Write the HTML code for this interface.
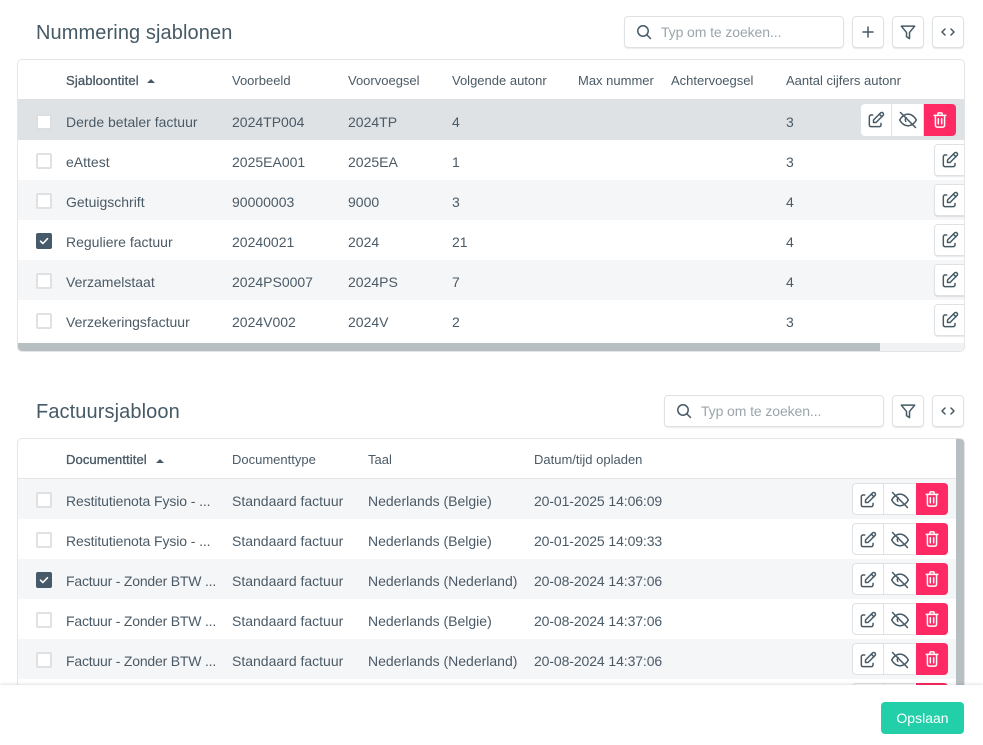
<!DOCTYPE html>
<html lang="nl">
<head>
<meta charset="utf-8">
<title>Sjablonen</title>
<style>
*{box-sizing:border-box}
html,body{margin:0;padding:0;width:983px;height:745px;overflow:hidden;background:#fff}
body{position:relative;font-family:"Liberation Sans",sans-serif;color:#4a5a66;font-size:14px}
.a{position:absolute}
h2{position:absolute;margin:0;font-weight:400;font-size:20px;line-height:24px;color:#465a66;white-space:nowrap;letter-spacing:.1px}
.box{position:absolute;background:#fff;border:1px solid #dfe2e4;border-radius:4px;box-shadow:0 1px 1px rgba(0,0,0,.08)}
.btn{position:absolute;width:32px;height:32px;background:#fff;border:1px solid #dfe2e4;border-radius:4px;box-shadow:0 1px 1px rgba(0,0,0,.1)}
.btn svg,.g svg{position:absolute;left:6px;top:6px}
svg{fill:none;stroke:#465a66;stroke-width:1.5;stroke-linecap:round;stroke-linejoin:round;display:block}
.g svg,.edit svg,.btn svg.f{stroke-width:1.8}
.ph{position:absolute;font-size:14px;line-height:16px;color:#9aa5ab;white-space:nowrap;letter-spacing:-.1px}
.tbl{position:absolute;left:17px;width:948px;background:#fff;border:1px solid #e3e5e7;overflow:hidden}
.row{position:absolute;left:0;width:948px;height:40px}
.row span,.hd span{position:absolute;white-space:nowrap;line-height:16px}
.row span{top:14px;font-size:14px;color:#4a5a66}
.row span.n{letter-spacing:-.2px}
.row span.r{letter-spacing:-.1px}
.row span.d{letter-spacing:-.1px}
.hd{position:absolute;left:0;top:0;width:948px;height:40px}
.hd span{top:13px;font-size:13px;color:#4a5a66}
.hd b{font-weight:400;-webkit-text-stroke:.35px #4a5a66}
.s{background:#f5f6f8}
.h{background:#dfe2e5}
.cb{position:absolute;left:18px;top:13px;width:16px;height:16px;background:#fff;border:2px solid #e0e1e2;border-radius:2px}
.cb.on{background:#465a6a;border-color:#465a6a}
.cb.on svg{position:absolute;left:0;top:0;stroke:#fff;stroke-width:1.6}
.arr{position:absolute;width:0;height:0;border-left:4px solid transparent;border-right:4px solid transparent;border-bottom:4px solid #465a66}
.g{position:absolute;width:32px;height:32px;background:#fff;border:1px solid #dfe2e4}
.g.e{border-radius:4px 0 0 4px;border-right:0}
.g.o{border-left:1px solid #dfe2e4;border-right:0}
.g.d{background:#ff2a63;border:0;border-radius:0 4px 4px 0}
.g.d svg{stroke:#fff;left:6px;top:6px}
.g.o svg{left:5px}
.g.e svg{left:5px}
.edit{position:absolute;left:916px;top:4px;width:40px;height:32px;background:#fff;border:1px solid #dfe2e4;border-radius:4px;box-shadow:0 1px 1px rgba(0,0,0,.1)}
.edit svg{position:absolute;left:5px;top:5px}
</style>
</head>
<body>
<svg width="0" height="0" style="position:absolute">
<defs>
<symbol id="i-edit" viewBox="0 0 24 24"><path d="M8 6H6a2 2 0 0 0-2 2v10a2 2 0 0 0 2 2h10a2 2 0 0 0 2-2v-2"/><path d="M20.400 6.600a2.100 2.100 0 0 0-3-3L9 12v3h3z"/><path d="M16 5l3 3"/></symbol>
<symbol id="i-eye" viewBox="0 0 24 24"><path d="M3 3l18 18"/><path d="M2 12c2.700-4.700 6-7 10-7s7.300 2.300 10 7c-2.700 4.700-6 7-10 7s-7.300-2.300-10-7z"/><path d="M10 9.300a3 3 0 0 0-.6 4.400"/></symbol>
<symbol id="i-trash" viewBox="0 0 24 24"><path d="M5 6.500h14"/><path d="M9.500 6.500V4.500a1 1 0 0 1 1-1h3a1 1 0 0 1 1 1v2"/><path d="M6.500 6.500v12a2 2 0 0 0 2 2h7a2 2 0 0 0 2-2v-12"/><path d="M10 10.500v6M14 10.500v6"/></symbol>
<symbol id="i-filter" viewBox="0 0 24 24"><path d="M4 5h16l-6.200 7.500V20l-3.600-2.500v-5z"/></symbol>
</defs>
</svg>

<h2 style="left:36px;top:21px">Nummering sjablonen</h2>

<div class="box" style="left:624px;top:16px;width:220px;height:32px"></div>
<svg class="a" style="left:636px;top:24px" width="16" height="16" viewBox="0 0 16 16"><circle cx="7" cy="7" r="5.200"/><path d="M11 11l3.500 3.500"/></svg>
<span class="ph" style="left:661px;top:24px">Typ om te zoeken...</span>
<div class="btn" style="left:852px;top:16px"><svg width="18" height="18" viewBox="0 0 18 18" style="left:6px;top:6px"><path d="M9 4v10M4 9h10"/></svg></div>
<div class="btn" style="left:892px;top:16px"><svg class="f" width="20" height="20" style="left:5px;top:5px"><use href="#i-filter"/></svg></div>
<div class="btn" style="left:932px;top:16px"><svg width="18" height="18" viewBox="0 0 18 18" style="left:6px;top:6px"><path d="M6 6L3 9l3 3M12 6l3 3-3 3"/></svg></div>

<div class="tbl" style="top:59px;height:293px;border-radius:5px">
  <div class="hd">
    <span style="left:48px;letter-spacing:.15px"><b>Sjabloontitel</b></span><i class="arr" style="left:129px;top:19px"></i>
    <span style="left:214px">Voorbeeld</span>
    <span style="left:330px">Voorvoegsel</span>
    <span style="left:434px">Volgende autonr</span>
    <span style="left:560px">Max nummer</span>
    <span style="left:653px">Achtervoegsel</span>
    <span style="left:768px">Aantal cijfers autonr</span>
  </div>

  <div class="a h" style="left:0;top:39px;width:948px;height:1px"></div>
  <div class="row h" style="top:40px">
    <i class="cb" style="border-color:#dcdedf;top:14px"></i>
    <span style="left:48px">Derde betaler factuur</span><span style="left:214px">2024TP004</span><span style="left:330px">2024TP</span><span style="left:434px">4</span><span style="left:768px">3</span>
    <div class="g e" style="left:843px;top:4px;border:0;border-radius:4px 0 0 4px"><svg width="20" height="20" style="left:5px;top:6px"><use href="#i-edit"/></svg></div>
    <div class="g o" style="left:873px;top:4px;border-top:0;border-bottom:0"><svg width="20" height="20" style="left:6px;top:6px"><use href="#i-eye"/></svg></div>
    <div class="g d" style="left:906px;top:4px"><svg width="20" height="20"><use href="#i-trash"/></svg></div>
  </div>

  <div class="row" style="top:80px"><i class="cb"></i>
    <span style="left:48px">eAttest</span><span style="left:214px">2025EA001</span><span style="left:330px">2025EA</span><span style="left:434px">1</span><span style="left:768px">3</span>
    <div class="edit"><svg width="20" height="20"><use href="#i-edit"/></svg></div>
  </div>
  <div class="row s" style="top:120px"><i class="cb"></i>
    <span style="left:48px">Getuigschrift</span><span style="left:214px">90000003</span><span style="left:330px">9000</span><span style="left:434px">3</span><span style="left:768px">4</span>
    <div class="edit"><svg width="20" height="20"><use href="#i-edit"/></svg></div>
  </div>
  <div class="row" style="top:160px"><i class="cb on"><svg width="12" height="12" viewBox="0 0 12 12"><path d="M2.500 6.200l2.400 2.300 4.600-4.800"/></svg></i>
    <span style="left:48px">Reguliere factuur</span><span style="left:214px">20240021</span><span style="left:330px">2024</span><span style="left:434px">21</span><span style="left:768px">4</span>
    <div class="edit"><svg width="20" height="20"><use href="#i-edit"/></svg></div>
  </div>
  <div class="row s" style="top:200px"><i class="cb"></i>
    <span style="left:48px">Verzamelstaat</span><span style="left:214px">2024PS0007</span><span style="left:330px">2024PS</span><span style="left:434px">7</span><span style="left:768px">4</span>
    <div class="edit"><svg width="20" height="20"><use href="#i-edit"/></svg></div>
  </div>
  <div class="row" style="top:240px"><i class="cb"></i>
    <span style="left:48px">Verzekeringsfactuur</span><span style="left:214px">2024V002</span><span style="left:330px">2024V</span><span style="left:434px">2</span><span style="left:768px">3</span>
    <div class="edit"><svg width="20" height="20"><use href="#i-edit"/></svg></div>
  </div>
  <div class="a" style="left:0;top:283px;width:948px;height:9px;background:#f1f2f3"></div>
  <div class="a" style="left:0;top:283px;width:862px;height:9px;background:#b7bfc2"></div>
</div>

<h2 style="left:36px;top:400px">Factuursjabloon</h2>

<div class="box" style="left:664px;top:395px;width:220px;height:32px"></div>
<svg class="a" style="left:676px;top:403px" width="16" height="16" viewBox="0 0 16 16"><circle cx="7" cy="7" r="5.200"/><path d="M11 11l3.500 3.500"/></svg>
<span class="ph" style="left:701px;top:403px">Typ om te zoeken...</span>
<div class="btn" style="left:892px;top:395px"><svg class="f" width="20" height="20" style="left:5px;top:5px"><use href="#i-filter"/></svg></div>
<div class="btn" style="left:932px;top:395px"><svg width="18" height="18" viewBox="0 0 18 18" style="left:6px;top:6px"><path d="M6 6L3 9l3 3M12 6l3 3-3 3"/></svg></div>

<div class="tbl" style="top:438px;height:290px;border-radius:5px 5px 0 0">
  <div class="hd" style="border-bottom:1px solid #e3e5e7">
    <span style="left:48px;top:13px;letter-spacing:.1px"><b>Documenttitel</b></span><i class="arr" style="left:138px;top:20px"></i>
    <span style="left:214px;top:13px">Documenttype</span>
    <span style="left:350px;top:13px">Taal</span>
    <span style="left:516px;top:13px">Datum/tijd opladen</span>
  </div>

  <div class="row s" style="top:40px"><i class="cb"></i>
    <span class="r" style="left:48px">Restitutienota Fysio - ...</span><span style="left:214px">Standaard factuur</span><span style="left:350px">Nederlands (Belgie)</span><span class="d" style="left:516px">20-01-2025 14:06:09</span>
    <div class="g e" style="left:834px;top:4px;border-right:0"><svg width="20" height="20"><use href="#i-edit"/></svg></div>
    <div class="g o" style="left:865px;top:4px"><svg width="20" height="20" style="left:6px"><use href="#i-eye"/></svg></div>
    <div class="g d" style="left:898px;top:4px"><svg width="20" height="20"><use href="#i-trash"/></svg></div>
  </div>
  <div class="row" style="top:80px"><i class="cb"></i>
    <span class="r" style="left:48px">Restitutienota Fysio - ...</span><span style="left:214px">Standaard factuur</span><span style="left:350px">Nederlands (Belgie)</span><span class="d" style="left:516px">20-01-2025 14:09:33</span>
    <div class="g e" style="left:834px;top:4px"><svg width="20" height="20"><use href="#i-edit"/></svg></div>
    <div class="g o" style="left:865px;top:4px"><svg width="20" height="20" style="left:6px"><use href="#i-eye"/></svg></div>
    <div class="g d" style="left:898px;top:4px"><svg width="20" height="20"><use href="#i-trash"/></svg></div>
  </div>
  <div class="row s" style="top:120px"><i class="cb on"><svg width="12" height="12" viewBox="0 0 12 12"><path d="M2.500 6.200l2.400 2.300 4.600-4.800"/></svg></i>
    <span class="n" style="left:48px">Factuur - Zonder BTW ...</span><span style="left:214px">Standaard factuur</span><span style="left:350px">Nederlands (Nederland)</span><span class="d" style="left:516px">20-08-2024 14:37:06</span>
    <div class="g e" style="left:834px;top:4px"><svg width="20" height="20"><use href="#i-edit"/></svg></div>
    <div class="g o" style="left:865px;top:4px"><svg width="20" height="20" style="left:6px"><use href="#i-eye"/></svg></div>
    <div class="g d" style="left:898px;top:4px"><svg width="20" height="20"><use href="#i-trash"/></svg></div>
  </div>
  <div class="row" style="top:160px"><i class="cb"></i>
    <span class="n" style="left:48px">Factuur - Zonder BTW ...</span><span style="left:214px">Standaard factuur</span><span style="left:350px">Nederlands (Belgie)</span><span class="d" style="left:516px">20-08-2024 14:37:06</span>
    <div class="g e" style="left:834px;top:4px"><svg width="20" height="20"><use href="#i-edit"/></svg></div>
    <div class="g o" style="left:865px;top:4px"><svg width="20" height="20" style="left:6px"><use href="#i-eye"/></svg></div>
    <div class="g d" style="left:898px;top:4px"><svg width="20" height="20"><use href="#i-trash"/></svg></div>
  </div>
  <div class="row s" style="top:200px"><i class="cb"></i>
    <span class="n" style="left:48px">Factuur - Zonder BTW ...</span><span style="left:214px">Standaard factuur</span><span style="left:350px">Nederlands (Nederland)</span><span class="d" style="left:516px">20-08-2024 14:37:06</span>
    <div class="g e" style="left:834px;top:4px"><svg width="20" height="20"><use href="#i-edit"/></svg></div>
    <div class="g o" style="left:865px;top:4px"><svg width="20" height="20" style="left:6px"><use href="#i-eye"/></svg></div>
    <div class="g d" style="left:898px;top:4px"><svg width="20" height="20"><use href="#i-trash"/></svg></div>
  </div>
  <div class="row" style="top:240px">
    <div class="g e" style="left:834px;top:4px"></div>
    <div class="g o" style="left:865px;top:4px"></div>
    <div class="g d" style="left:898px;top:4px"></div>
  </div>
  <div class="a" style="left:938px;top:0;width:9px;height:290px;background:#b7bfc2;border-radius:0 4px 0 0"></div>
</div>

<div class="a" style="left:0;top:685px;width:983px;height:60px;background:#fff;box-shadow:0 -1px 3px rgba(0,0,0,.12)"></div>
<div class="a" style="left:881px;top:702px;width:83px;height:32px;background:#22cfa8;border-radius:4px;color:#fff;text-align:center;font-size:14px;line-height:32px">Opslaan</div>
</body>
</html>
